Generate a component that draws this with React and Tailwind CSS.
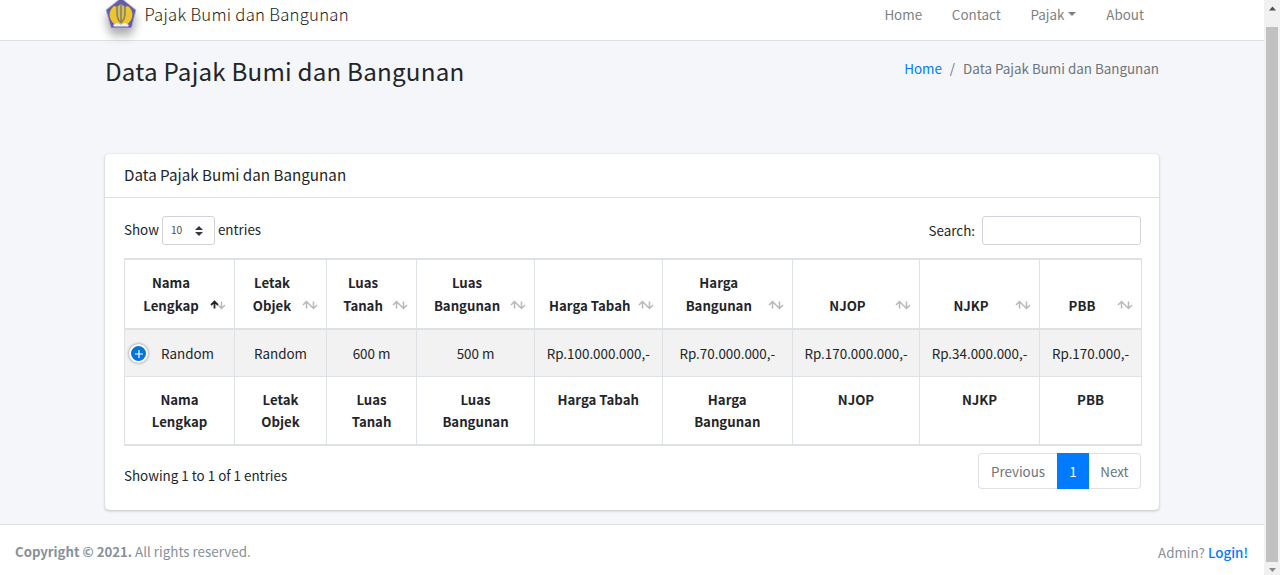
import React from "react";

const columns = [
  { lines: ["Nama", "Lengkap"], value: "Random", width: "w-[110px]" },
  { lines: ["Letak", "Objek"], value: "Random", width: "w-[92px]" },
  { lines: ["Luas", "Tanah"], value: "600 m", width: "w-[90px]" },
  { lines: ["Luas", "Bangunan"], value: "500 m", width: "w-[118px]" },
  { lines: ["Harga Tabah"], value: "Rp.100.000.000,-", width: "w-[127.500px]" },
  { lines: ["Harga", "Bangunan"], value: "Rp.70.000.000,-", width: "w-[130.500px]" },
  { lines: ["NJOP"], value: "Rp.170.000.000,-", width: "w-[127px]" },
  { lines: ["NJKP"], value: "Rp.34.000.000,-", width: "w-[120px]" },
  { lines: ["PBB"], value: "Rp.170.000,-", width: "w-[102px]" },
];

function Logo() {
  return (
    <svg className="-mt-[4px] h-[34px] w-[32px] shrink-0 drop-shadow-[0_7px_5px_rgba(0,0,0,0.32)]" viewBox="0 0 32 34">
      <path d="M16 2 31 14 26.500 32H6L1 14Z" fill="#625ea8" stroke="#b9b7da" strokeWidth="0.8" />
      <path d="M9 10c-7 6-5 14 1 18.500h12c6-4.500 8-12.500 1-18.500l-3 1-4-3-4 3Z" fill="#edc52f" />
      <path d="M16 8v18M12 10v7q0 6 4 10M20 10v7q0 6-4 10" fill="none" stroke="#8d8657" strokeWidth="1.7" />
      <path d="M14 10v10M18 10v10" fill="none" stroke="#a8b5bb" strokeWidth="1" />
      <path d="m8 29 4-2 4 1.500 4-1.500 4 2-1 1.500H9Z" fill="#f4f0e4" />
    </svg>
  );
}

function SortArrows({ active }) {
  return (
    <svg className="absolute right-[8px] bottom-[18px] h-[10px] w-[16px]" viewBox="0 0 16 10" fill="none" strokeWidth="1.5">
      <path d="M1 5 4.500 1.500 8 5M4.500 1.500v7" stroke={active ? "#212529" : "#b8b9bb"} strokeWidth={active ? 1.8 : 1.5} />
      <path d="M8 5 11.500 8.500 15 5M11.500 8.500V1.500" stroke="#b8b9bb" />
    </svg>
  );
}

function Lines({ lines }) {
  return lines.map((line) => (
    <span key={line} className="block whitespace-nowrap">{line}</span>
  ));
}

export default function App() {
  return (
    <div className="flex h-[575px] w-[1280px] overflow-hidden bg-[#f4f6f9] font-['Noto_Sans_CJK_SC',sans-serif] text-[13.4px] leading-[22.5px] text-[#212529]">
      <div className="flex w-[1264px] flex-col">
        <nav className="flex h-[41px] items-start justify-between border-b border-[#dee2e6] bg-white pr-[120px] pl-[105px] text-[#7f7f7f]">
          <div className="flex items-start">
            <Logo />
            <span className="ml-[7.500px] pt-[3px] text-[16.7px] font-light tracking-[0.27px] whitespace-nowrap text-[#1a1a1a]">Pajak Bumi dan Bangunan</span>
          </div>
          <div className="flex gap-[29.800px] pt-[3px]">
            <a>Home</a>
            <a>Contact</a>
            <a className="flex items-center">Pajak<span className="ml-[4px] border-x-4 border-t-4 border-x-transparent border-t-[#7f7f7f]" /></a>
            <a>About</a>
          </div>
        </nav>

        <header className="flex h-[113px] items-start justify-between pr-[105px] pl-[105px]">
          <h1 className="pt-[13px] text-[24.2px] leading-[34px] tracking-[0.2px] whitespace-nowrap">Data Pajak Bumi dan Bangunan</h1>
          <div className="flex pt-[16px] whitespace-nowrap text-[#6c757d]">
            <a className="text-[#007bff]">Home</a>
            <span className="px-[8px]">/</span>
            <span>Data Pajak Bumi dan Bangunan</span>
          </div>
        </header>

        <main className="ml-[105px] h-[355.500px] w-[1054.400px] rounded-[4px] bg-white shadow-[0_0_1px_rgba(0,0,0,0.2),0_1px_3px_rgba(0,0,0,0.2)]">
          <h2 className="flex h-[44px] items-center border-b border-[#dfdfdf] px-[19px] pb-[3px] text-[15.2px]">Data Pajak Bumi dan Bangunan</h2>
          <div className="px-[19px] pt-[18px]">
            <div className="flex h-[42px] w-[1017px] items-start justify-between">
              <div className="flex items-center">
                <span className="pb-[2px]">Show</span>
                <div className="mr-[3px] ml-[3px] flex h-[29px] w-[53px] items-center justify-between rounded-[3px] border border-[#ced4da] pr-[11px] pl-[8px] text-[10.2px] text-[#495057]">
                  <span>10</span>
                  <svg className="h-[10px] w-[8px]" viewBox="0 0 8 10" fill="#343a40"><path d="M4 0 8 4H0ZM0 6h8l-4 4Z" /></svg>
                </div>
                <span className="pb-[2px]">entries</span>
              </div>
              <div className="flex items-center">
                <label htmlFor="search">Search:</label>
                <input id="search" className="ml-[7px] h-[29px] w-[159px] rounded-[3px] border border-[#ced4da] bg-white" />
              </div>
            </div>

            <table className="w-[1018px] table-fixed border-separate border-spacing-0 border-t border-r border-b border-[#dee2e6] text-center">
              <thead>
                <tr className="h-[71px] text-[13.2px]">
                  {columns.map((c, i) => (
                    <th key={i} className={`${c.width} relative border-t border-b-2 border-l border-[#dee2e6] pr-[28px] pb-[11px] pl-[11px] align-bottom font-bold`}>
                      <Lines lines={c.lines} />
                      <SortArrows active={i === 0} />
                    </th>
                  ))}
                </tr>
              </thead>
              <tbody>
                <tr className="h-[47px] bg-[#f2f2f2]">
                  {columns.map((c, i) => (
                    <td key={i} className={`relative border-b border-l border-[#dee2e6] pt-px whitespace-nowrap ${i === 0 ? "pl-[16px]" : ""}`}>
                      {i === 0 && (
                        <span className="absolute top-[14px] left-[4px] flex size-[19px] items-center justify-center rounded-full border-2 border-white bg-[#0275d8] shadow-[0_0_3px_#777]">
                          <svg className="size-[8px]" viewBox="0 0 8 8" stroke="white" strokeWidth="1.2"><path d="M4 0v8M0 4h8" /></svg>
                        </span>
                      )}
                      {c.value}
                    </td>
                  ))}
                </tr>
              </tbody>
              <tfoot>
                <tr className="h-[68px] text-[13.2px]">
                  {columns.map((c, i) => (
                    <th key={i} className="border-b border-l border-[#dee2e6] pt-[11.500px] align-top font-bold">
                      <Lines lines={c.lines} />
                    </th>
                  ))}
                </tr>
              </tfoot>
            </table>

            <div className="flex w-[1017px] items-start justify-between pt-[7px]">
              <p className="pt-[11px]">Showing 1 to 1 of 1 entries</p>
              <div className="flex h-[36px] items-stretch text-[#6c757d]">
                <a className="flex w-[79px] items-center justify-center rounded-l-[4px] border border-r-0 border-[#dee2e6] pt-px">Previous</a>
                <a className="flex w-[32px] items-center justify-center bg-[#007bff] pt-px text-white">1</a>
                <a className="flex w-[52px] items-center justify-center rounded-r-[4px] border border-l-0 border-[#dee2e6] pt-px">Next</a>
              </div>
            </div>
          </div>
        </main>

        <footer className="mt-[14.500px] flex h-[51px] items-center justify-between border-t border-[#dee2e6] bg-white pt-[4px] pr-[16px] pl-[15px] text-[#869099]">
          <p><strong className="text-[13.2px] font-bold">Copyright © 2021.</strong> All rights reserved.</p>
          <p>Admin? <a className="font-medium text-[#007bff]">Login!</a></p>
        </footer>
      </div>

      <div className="flex w-[16px] flex-col items-center justify-between bg-[#f1f1f1]">
        <svg className="h-[27px] w-[15px]" viewBox="0 0 15 27"><path d="M4 10.500 7.500 6.500 11 10.500Z" fill="#505050" /></svg>
        <div className="w-[12px] flex-1 bg-[#c1c1c1]" />
        <svg className="h-[13px] w-[15px]" viewBox="0 0 15 13"><path d="M4 6h7l-3.500 4Z" fill="#8b8b8b" /></svg>
      </div>
    </div>
  );
}
